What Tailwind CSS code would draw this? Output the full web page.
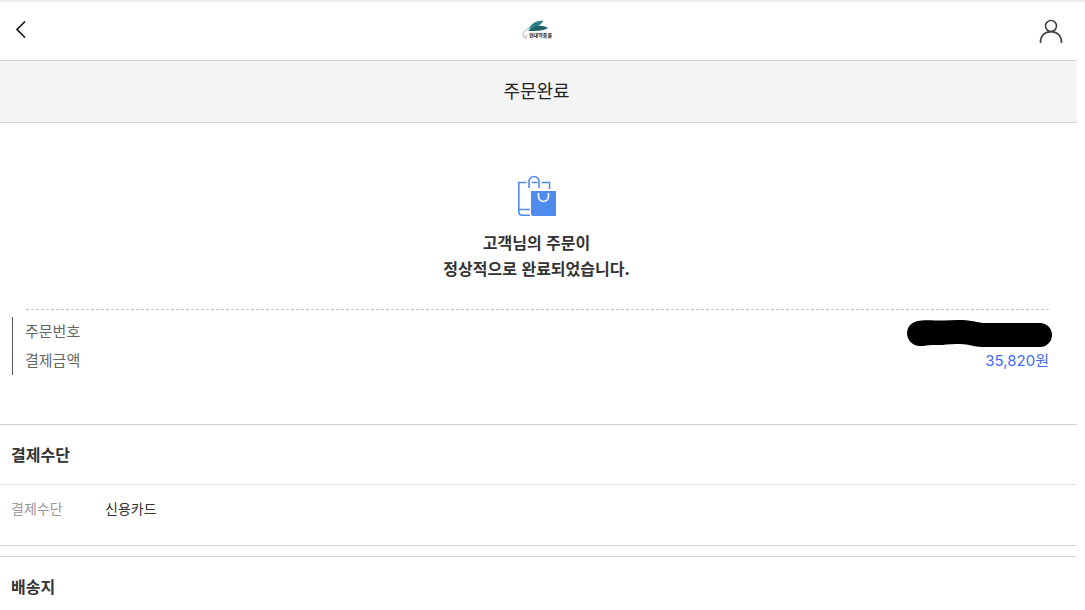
<!DOCTYPE html>
<html lang="ko">
  <head>
    <meta charset="UTF-8" />
    <meta name="viewport" content="width=device-width, initial-scale=1.0" />
    <title>주문완료</title>
    <script src="https://cdn.jsdelivr.net/npm/@tailwindcss/browser@4"></script>
  </head>

  <body class="bg-white pr-2 overflow-hidden text-[#333] font-['Noto_Sans_CJK_KR',sans-serif]">
    <!-- Header -->
    <header class="-mr-2 pr-2 border-t-2 border-[#ececec]">
      <div class="flex items-center justify-between h-[58px] pl-3 pr-3">
        <button type="button" aria-label="뒤로" class="flex w-7 h-8">
          <svg class="w-5 h-[30px]" viewBox="0 0 20 30" fill="none" stroke="#111" stroke-width="1.6">
            <path d="M13 6.5 5 14.5l8 8" />
          </svg>
        </button>
        <a href="#" aria-label="현대약품몰">
          <svg class="w-8 h-6" viewBox="0 0 32 24">
            <path fill="#2a8286" d="M8 10C9 6 15 1 22 2c-1 3-5 6-14 8z" />
            <path fill="#1d626b" d="M7 12C12 7 20 5 27 9c-5 3-11 3-20 3z" />
            <path fill="none" stroke="#7fa3a8" stroke-width=".8" d="M9 9C4 11 2 13 2 16c0 2 1 3 4 3" />
            <circle cx="5" cy="17" r=".7" fill="#dc6655" />
            <text x="8" y="18" font-size="5" font-weight="700" fill="#222">현대약품몰</text>
          </svg>
        </a>
        <a href="#" aria-label="마이페이지" class="flex justify-end w-8">
          <svg class="w-7 h-7" viewBox="0 0 28 28" fill="none" stroke="#444" stroke-width="1.6">
            <circle cx="14" cy="9" r="5.5" />
            <path d="M3.5 26v-1C3.5 18.5 8 14.6 14 14.6S24.500 18.500 24.500 25v1" />
          </svg>
        </a>
      </div>
    </header>

    <main>
      <h1 class="flex items-center justify-center h-[63px] pb-1 pr-1 border-y border-[#d2d2d2] bg-[#f4f4f4] text-lg font-normal text-[#222]">주문완료</h1>

      <!-- Order result -->
      <section class="pl-3 pr-4 pt-[52px] pb-[49px]">
        <svg class="w-10 h-[42px] mx-auto" viewBox="0 0 40 42" fill="none" stroke="#4f8bed" stroke-width="1.6">
          <path d="M9.500 7.500H1.800V37q0 3.200 3 3.200H13M1.800 34.500H13M14.500 7.500h6M24.500 7.500h8V14" />
          <path d="M12 13V6.500a5 5 0 0 1 10 0V13" />
          <path fill="#4f8bed" stroke="none" d="M14 16h25v25H16q-2 0-2-2z" />
          <path stroke="#fff" d="M21.500 18v3.500a5 5 0 0 0 10 0V18" />
        </svg>
        <p class="pt-3 pb-7 text-center text-base leading-[26px] font-bold">
          고객님의 주문이<br />
          정상적으로 완료되었습니다.
        </p>
        <div class="ml-[14px] mr-3 mb-[7px] h-px bg-[repeating-linear-gradient(90deg,#c4c4c4_0_3px,transparent_3px_5px)]"></div>
        <dl class="flex flex-col gap-px border-l border-[#555] px-3 text-[15px] leading-7 text-[#666]">
          <div class="flex justify-between">
            <dt>주문번호</dt>
            <dd class="-mr-1">
              <svg class="w-[146px] h-7 overflow-visible" viewBox="0 -2 146 28" aria-hidden="true">
                <path d="M12.500 1.700C24 .7 29 2 37 1.500 48 .5 62 .5 70 3l6 1h57a12 12 0 0 1 0 24H75c-9 0-12-3-22-3-11-.5-17 1.500-24 1-7-.5-10 1-17 1C-4 25-4 3 12.500 1.700z" />
              </svg>
            </dd>
          </div>
          <div class="flex justify-between">
            <dt>결제금액</dt>
            <dd class="pt-px text-[#3f6cf6] font-['Inter','Noto_Sans_CJK_KR',sans-serif]">35,820원</dd>
          </div>
        </dl>
      </section>

      <!-- Payment method -->
      <section class="mb-2.5 border-y border-[#d2d2d2]">
        <h2 class="px-[11px] pb-px text-base leading-[58px] font-bold">결제수단</h2>
        <dl class="flex border-t border-[#e5e5e5] px-[11px] pt-[11px] pb-[25px] text-sm leading-6">
          <dt class="w-[94px] text-[#999]">결제수단</dt>
          <dd>신용카드</dd>
        </dl>
      </section>

      <!-- Shipping address -->
      <section class="border-t border-[#d2d2d2]">
        <h2 class="px-[11px] text-base leading-[58px] font-bold">배송지</h2>
      </section>
    </main>
  </body>
</html>
